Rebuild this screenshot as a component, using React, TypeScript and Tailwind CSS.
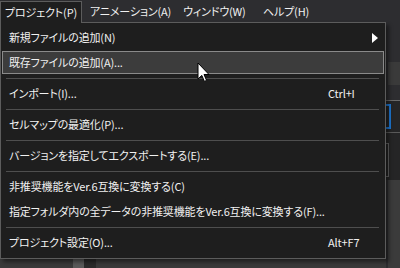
import React from "react";

type Item =
  | { kind: "item"; label: string; shortcut?: string; sub?: boolean; hover?: boolean }
  | { kind: "sep" };

const items: Item[] = [
  { kind: "item", label: "新規ファイルの追加(N)", sub: true },
  { kind: "item", label: "既存ファイルの追加(A)...", hover: true },
  { kind: "sep" },
  { kind: "item", label: "インポート(I)...", shortcut: "Ctrl+I" },
  { kind: "sep" },
  { kind: "item", label: "セルマップの最適化(P)..." },
  { kind: "sep" },
  { kind: "item", label: "バージョンを指定してエクスポートする(E)..." },
  { kind: "sep" },
  { kind: "item", label: "非推奨機能をVer.6互換に変換する(C)" },
  { kind: "item", label: "指定フォルダ内の全データの非推奨機能をVer.6互換に変換する(F)..." },
  { kind: "sep" },
  { kind: "item", label: "プロジェクト設定(O)...", shortcut: "Alt+F7" },
];

export default function App() {
  return (
    <div
      className="relative w-[400px] h-[268px] overflow-hidden bg-[#2d2d30] text-[11px] tracking-[-0.15px] text-[#f1f1f1] [font-feature-settings:'palt']"
      style={{ fontFamily: '"Noto Sans CJK JP", "Noto Sans", sans-serif' }}
    >
      {/* menu bar */}
      <div className="flex h-[22px] items-start whitespace-nowrap bg-[#2d2d30]">
        <div className="relative z-20 mt-[1px] flex h-[22px] w-[82px] items-center border-l border-t border-r border-[#5c5c5c] bg-[#1e1e1e] pl-[4px]">
          プロジェクト(P)
        </div>
        <div className="flex h-[22px] w-[93px] items-center pl-[8px]">アニメーション(A)</div>
        <div className="flex h-[22px] w-[80px] items-center pl-[8px]">ウィンドウ(W)</div>
        <div className="flex h-[22px] items-center pl-[8px]">ヘルプ(H)</div>
      </div>

      {/* underlying app */}
      <div className="flex h-[246px]">
        <div className="flex w-[386px] flex-col">
          <div className="flex-1 bg-[#1e1e1e]" />
          <div className="flex h-[10px] bg-[#3a3a3a]">
            <div className="w-[73px]" />
            <div className="w-[11px] bg-[#595959]" />
            <div className="w-[12px] bg-[#2a2a2a]" />
          </div>
        </div>
        <div className="flex w-[14px] flex-col">
          <div className="h-[40px] bg-[#2d2d30]" />
          <div className="ml-[2px] h-[23px] bg-[#3a3a3a]" />
          <div className="h-[15px] bg-[#2d2d30]" />
          <div className="h-[1px] bg-[#6a6a6a]" />
          <div className="flex h-[31px] items-stretch bg-[#252526]">
            <div className="my-[3px] w-[5px] border-y-2 border-r-2 border-[#1e78d4]" />
          </div>
          <div className="h-[1px] bg-[#5a5a5a]" />
          <div className="h-[10px] bg-[#252526]" />
          <div className="flex h-[34px] bg-[#252526]">
            <div className="w-[3px] border-y border-r border-[#666]" />
          </div>
          <div className="h-[3px] bg-[#252526]" />
          <div className="ml-[2px] flex-1 bg-[#3b3b3b]" />
        </div>
      </div>

      {/* dropdown */}
      <div className="absolute left-0 top-[22px] z-10 flex w-[386px] flex-col border border-[#5c5c5c] bg-[#1e1e1e] px-[1px] pt-[2px] pb-[3px] shadow-[3px_3px_4px_rgba(0,0,0,0.45)]">
        {items.map((it, i) =>
          it.kind === "sep" ? (
            <div key={i} className="flex h-[6px] items-center px-[4px]">
              <div className="h-[1px] w-[373px] bg-[#4e4e4e]" />
            </div>
          ) : (
            <div key={i} className="flex h-[25px] items-center py-[1px]">
              <div
                className={
                  "flex h-full w-full items-center pl-[6px] " +
                  (it.hover ? "border border-[#8a8a8a] bg-[#3c3c3c]" : "border border-transparent")
                }
              >
                <span className="whitespace-nowrap">{it.label}</span>
                {it.shortcut && (
                  <span className="absolute left-[327px] whitespace-nowrap">{it.shortcut}</span>
                )}
                {it.sub && (
                  <svg className="absolute left-[371px]" width="6" height="10" viewBox="0 0 6 10">
                    <path d="M0 0 L6 5 L0 10 Z" fill="#ffffff" />
                  </svg>
                )}
              </div>
            </div>
          )
        )}
      </div>

      {/* mouse cursor */}
      <svg className="absolute left-[197px] top-[62px] z-30" width="13" height="21" viewBox="0 0 13 21">
        <path
          d="M1 1 L1 17 L4.8 13.4 L7.4 19.4 L9.6 18.4 L7 12.5 L12 12.5 Z"
          fill="#ffffff"
          stroke="#000000"
          strokeWidth="1"
        />
      </svg>
    </div>
  );
}
